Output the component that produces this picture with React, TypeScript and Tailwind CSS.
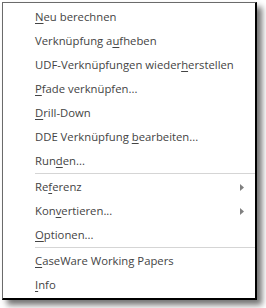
import React from "react";

type Item = { pre: string; key: string; post: string; sub?: boolean } | "sep";

const items: Item[] = [
  { pre: "", key: "N", post: "eu berechnen" },
  { pre: "Verknüpfung a", key: "u", post: "fheben" },
  { pre: "UDF-Verknüpfungen wieder", key: "h", post: "erstellen" },
  { pre: "", key: "P", post: "fade verknüpfen..." },
  { pre: "", key: "D", post: "rill-Down" },
  { pre: "DDE Verknüpfung ", key: "b", post: "earbeiten..." },
  { pre: "Run", key: "d", post: "en..." },
  "sep",
  { pre: "Re", key: "f", post: "erenz", sub: true },
  { pre: "Kon", key: "v", post: "ertieren...", sub: true },
  { pre: "", key: "O", post: "ptionen..." },
  "sep",
  { pre: "", key: "C", post: "aseWare Working Papers" },
  { pre: "", key: "I", post: "nfo" },
];

export default function App() {
  return (
    <div className="w-[266px] h-[308px] bg-white pl-[2px] pt-[2px]">
      <div
        className="w-[255px] h-[298px] bg-white border-l border-t border-[#6b6b6b] border-r-2 border-b-2 border-r-black border-b-black shadow-[5px_5px_6px_rgba(0,0,0,0.55)] pt-[2px] flex flex-col"
        style={{ fontFamily: '"Segoe UI", "Open Sans", "Noto Sans", sans-serif' }}
      >
        {items.map((it, i) =>
          it === "sep" ? (
            <div key={i} className="h-[2px] pl-[32px] pr-0">
              <div className="h-px bg-[#d5d5d5]" />
            </div>
          ) : (
            <div
              key={i}
              className="h-[24px] flex items-center pl-[32px] pr-[10px] text-[11.3px] text-[#444444] whitespace-nowrap"
            >
              <span className="flex-1">
                {it.pre}
                <span className="underline underline-offset-2">{it.key}</span>
                {it.post}
              </span>
              {it.sub && (
                <svg width="4" height="7" viewBox="0 0 4 7" className="mr-[1px]">
                  <path d="M0 0 L4 3.5 L0 7 Z" fill="#808080" />
                </svg>
              )}
            </div>
          )
        )}
      </div>
    </div>
  );
}
